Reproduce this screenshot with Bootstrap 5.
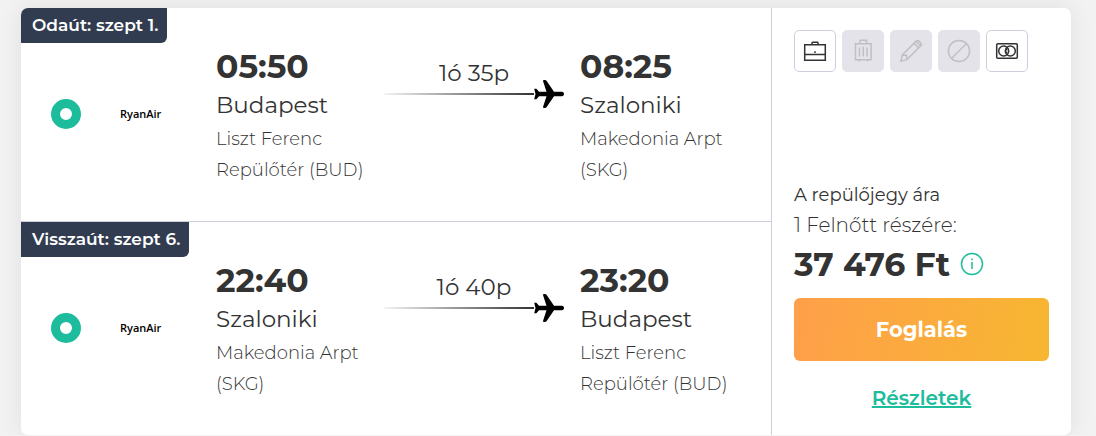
<!DOCTYPE html>
<html lang="hu">
<head>
<meta charset="utf-8">
<meta name="viewport" content="width=device-width, initial-scale=1">
<title>Repülőjegy</title>
<link href="https://cdn.jsdelivr.net/npm/bootstrap@5.3.0/dist/css/bootstrap.min.css" rel="stylesheet">
<script src="https://cdn.jsdelivr.net/npm/bootstrap@5.3.0/dist/js/bootstrap.bundle.min.js" defer></script>
<style>
body { background: #f2f2f2; color: #333; font-family: Montserrat, Inter, "Liberation Sans", sans-serif; padding: 8px 25px 0 21px; }
.offer { background: #fff; border-radius: 7px; box-shadow: 0 0 24px rgba(0, 0, 0, .08); }
.legs { min-width: 0; border-right: 1px solid #cfcfdc; }
.leg { display: grid; grid-template-columns: 30px 135px 1fr 180px 16px 1fr; align-items: center; padding: 34px 23px 35px 30px; }
.leg + .leg { border-top: 1px solid #cfcfdc; }
.leg-tag { top: 0; left: 0; background: #323c50; color: #fff; font-size: 17px; font-weight: 600; line-height: 35px; padding: 0 9px 0 11px; border-radius: 0 0 6px 0; }
.leg:first-child .leg-tag { border-top-left-radius: 7px; }
.pick { appearance: none; width: 30px; height: 30px; margin: 0; border: 9px solid #1dbc9c; border-radius: 50%; background: #fff; }
.airline { font: 600 11px/20px "Open Sans", sans-serif; color: #000; padding-left: 39px; }
.stop { padding-top: 4px; }
.hour { font-size: 33px; font-weight: 700; line-height: 40px; }
.city { font-size: 23px; font-weight: 400; line-height: 38px; }
.airport { font-size: 18px; font-weight: 300; line-height: 31px; }
.flight { align-self: start; padding-top: 15px; }
.duration { font-size: 23px; line-height: 32px; }
.trail { height: 2px; background: linear-gradient(90deg, #f4f4f4, #333); }
.track { margin-top: -9px; }
.buy { flex: 0 0 299px; padding: 22px; }
.perk { width: 42px; height: 42px; border: 1px solid #d0cfdf; border-radius: 5px; background: #fff; color: #333; padding: 0; }
.perk:disabled { background: #e4e3ea; border-color: #e4e3ea; color: #c0c0c2; }
.perks { gap: 6px; }
.stroked { fill: none; stroke: currentColor; stroke-width: 1.5; }
.note { font-size: 18px; line-height: 30px; }
.pax { font-size: 20px; font-weight: 300; }
.total { gap: 10px; }
.price { font-size: 33px; font-weight: 700; line-height: 48px; }
.info { color: #1dbc9c; }
.book { background: linear-gradient(100deg, #ff9f4a, #f7b731); color: #fff; font-size: 21px; font-weight: 700; line-height: 31px; margin-top: 10px; padding: 16px; border: 0; border-radius: 6px; }
.details { color: #1dbc9c; font-size: 20px; font-weight: 600; line-height: 30px; margin: 22px 0 0; }
</style>
</head>
<body>
<svg class="d-none" aria-hidden="true">
  <symbol id="plane" viewBox="0 0 30 28"><path d="M30 14c0-1.200-.8-2.200-2-2.200h-8L12.500 .8c-.7-1-3.600-1-3.500.1L12.500 11.800H5L2.400 8.700H.2L1.500 14 .2 19.300h2.200L5 16.200h7.500L9 27.100c-.1 1.100 2.800 1.100 3.500.1L20 16.200h8c1.200 0 2-1 2-2.200z"/></symbol>
</svg>
<main class="offer d-flex">
  <div class="legs flex-grow-1">
    <section class="leg position-relative">
      <div class="leg-tag position-absolute">Odaút: szept 1.</div>
      <input class="pick" type="radio" name="out" aria-label="Odaút 05:50" checked>
      <div class="airline">RyanAir</div>
      <div class="stop"><div class="hour">05:50</div><div class="city">Budapest</div><div class="airport">Liszt Ferenc Repülőtér (BUD)</div></div>
      <div class="flight">
        <div class="duration text-center">1ó 35p</div>
        <div class="track d-flex align-items-center"><div class="trail flex-grow-1"></div><svg width="30" height="28"><use href="#plane"/></svg></div>
      </div>
      <span></span>
      <div class="stop"><div class="hour">08:25</div><div class="city">Szaloniki</div><div class="airport">Makedonia Arpt (SKG)</div></div>
    </section>
    <section class="leg position-relative">
      <div class="leg-tag position-absolute">Visszaút: szept 6.</div>
      <input class="pick" type="radio" name="back" aria-label="Visszaút 22:40" checked>
      <div class="airline">RyanAir</div>
      <div class="stop"><div class="hour">22:40</div><div class="city">Szaloniki</div><div class="airport">Makedonia Arpt (SKG)</div></div>
      <div class="flight">
        <div class="duration text-center">1ó 40p</div>
        <div class="track d-flex align-items-center"><div class="trail flex-grow-1"></div><svg width="30" height="28"><use href="#plane"/></svg></div>
      </div>
      <span></span>
      <div class="stop"><div class="hour">23:20</div><div class="city">Budapest</div><div class="airport">Liszt Ferenc Repülőtér (BUD)</div></div>
    </section>
  </div>
  <aside class="buy d-flex flex-column">
    <div class="perks d-flex mb-auto">
      <button class="perk" type="button" aria-label="Kézipoggyász"><svg class="stroked" width="24" height="24" viewBox="0 0 24 24"><path d="M1.700 5.700h20.600v15.600H1.700zM2 15.500h20M9 5.500V4q0-.7.700-.7h4.600q.7 0 .7.700v1.500M12 12.200v1.800"/></svg></button>
      <button class="perk" type="button" aria-label="Feladott poggyász" disabled><svg class="stroked" width="24" height="24" viewBox="0 0 24 24"><path d="M4.500 4.700h15.600v16.100H4.500zM9 4.500V1.300h6.500v3.200M8.500 8.500v9M12.300 7.500v10M16 8.500v9M8 21v1.500M16.500 21v1.500"/></svg></button>
      <button class="perk" type="button" aria-label="Módosítás" disabled><svg class="stroked" width="24" height="24" viewBox="0 0 24 24"><path d="M1.800 22.300l1.500-6.400L17.200 2.100q1.300-1.300 2.700 0l1.900 2q1.300 1.300 0 2.600L8 20.600zM3.300 15.900l4.200.4L8 20.600M15 4.300l4.700 4.600M17 2.300l4.800 4.700"/></svg></button>
      <button class="perk" type="button" aria-label="Lemondás" disabled><svg class="stroked" width="24" height="24" viewBox="0 0 24 24"><circle cx="12" cy="12" r="10.600"/><path d="M4.500 19.500l15-15"/></svg></button>
      <button class="perk" type="button" aria-label="Fizetés"><svg class="stroked" width="24" height="24" viewBox="0 0 24 24"><rect x="1.700" y="4.700" width="20.600" height="14.600" rx="1"/><circle cx="8.700" cy="12" r="5"/><circle cx="15.300" cy="12" r="5"/><path d="M10.300 10.800h2M10.300 13.200h2"/></svg></button>
    </div>
    <div class="note">A repülőjegy ára</div>
    <div class="note pax">1 Felnőtt részére:</div>
    <div class="total d-flex align-items-center">
      <span class="price">37 476 Ft</span>
      <svg class="info" width="24" height="24" viewBox="0 0 24 24" fill="none" stroke="currentColor" stroke-width="1.500"><circle cx="12" cy="12" r="10.500"/><path d="M12 10v7M12 6.500v1.700"/></svg>
    </div>
    <button class="book btn w-100" type="button">Foglalás</button>
    <div class="text-center details"><a class="text-reset" href="#">Részletek</a></div>
  </aside>
</main>
</body>
</html>
